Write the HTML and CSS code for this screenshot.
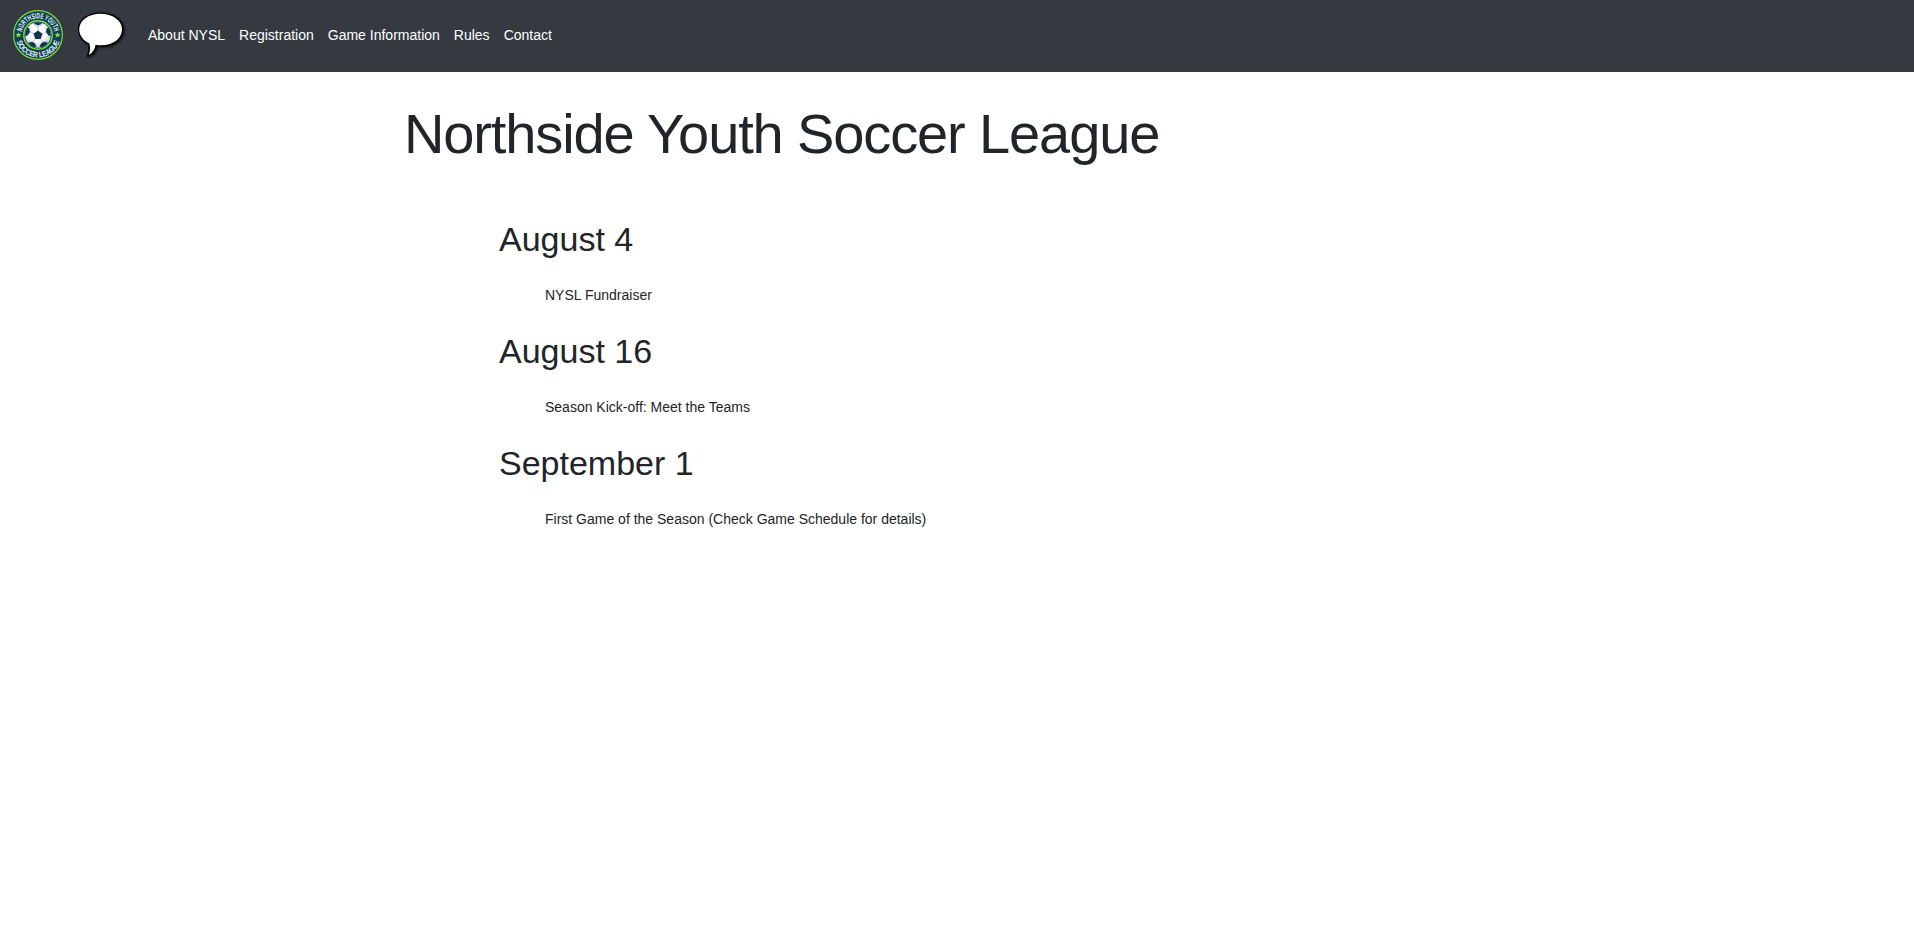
FILE: index.html
```html
<!DOCTYPE html>
<html lang="en">
<head>
<meta charset="utf-8">
<title>Northside Youth Soccer League</title>
<link rel="stylesheet" href="styles.css">
</head>
<body>
<nav class="navbar">
  <a class="brand" href="#" aria-label="Home">
    <svg class="logo" viewBox="0 0 100 100">
      <defs>
        <path id="arc-top" d="M17 50A33 33 0 0 1 83 50"/>
        <path id="arc-bottom" d="M5 50A45 45 0 0 0 95 50"/>
        <clipPath id="ball"><circle cx="50" cy="50" r="25.500"/></clipPath>
        <radialGradient id="shade" cx=".45" cy=".4" r=".6"><stop offset=".55" stop-color="#fff"/><stop offset="1" stop-color="#c3ced8"/></radialGradient>
      </defs>
      <circle cx="50" cy="50" r="48.800" fill="#0f4257" stroke="#7cdc3c" stroke-width="2.400"/>
      <circle cx="50" cy="50" r="28.500" fill="#0f4257" stroke="#7cdc3c" stroke-width="2.800"/>
      <circle cx="50" cy="50" r="25.500" fill="url(#shade)"/>
      <g clip-path="url(#ball)">
        <path fill="none" stroke="#a9b6c2" stroke-width="1.500" d="M50 42v-8M57.600 47.500l8-3M54.700 56.500l5 7M45.300 56.500l-5 7M42.400 47.500l-8-3M50 34l-9-5M50 34l9-5M65.600 44.500l1-9M65.600 44.500l7 6M59.700 63.500l9-1M59.700 63.500l-4 8M40.300 63.500l-9-1M40.300 63.500l4 8M34.400 44.500l-1-9M34.400 44.500l-7 6"/>
        <path fill="#0f3850" d="M50 41l9 6.500-3.400 10.500H44.400L41 47.500zM40 22h20l-3 6-7 3-7-3zM77 36v17l-6-2-5-7 2-8zM67 77l-14-4 3-6 5-3 8 1zM33 77l14-4-3-6-5-3-8 1zM23 36v17l6-2 5-7-2-8z"/>
      </g>
      <path fill="#86df35" d="M11 44l1.800 4h4.400l-3.500 2.800 1.300 4.200-4-2.500-4 2.500 1.300-4.200L4.800 48h4.400zM89 44l1.800 4h4.400l-3.500 2.800 1.300 4.200-4-2.500-4 2.500 1.300-4.200-3.500-2.800h4.400z"/>
      <text class="logo-text"><textPath href="#arc-top" startOffset="50%" text-anchor="middle" textLength="91" lengthAdjust="spacingAndGlyphs">NORTHSIDE YOUTH</textPath></text>
      <text class="logo-text"><textPath href="#arc-bottom" startOffset="50%" text-anchor="middle" textLength="114" lengthAdjust="spacingAndGlyphs">SOCCER LEAGUE</textPath></text>
    </svg>
  </a>
  <a class="chat" href="#" aria-label="Messages">
    <svg class="bubble" viewBox="0 0 60 58">
      <defs><filter id="soft" x="-20%" y="-20%" width="140%" height="140%"><feGaussianBlur stdDeviation="1.100"/></filter></defs>
      <path filter="url(#soft)" fill="#000" stroke="#000" stroke-width="3" opacity=".75" transform="translate(1.200 .8)" d="M30.500 10.800c12 0 21.500 6.500 21.500 15.500s-8.500 16-20.500 16c-2 0-4-.2-6-.6-.4 4.300-3 8.500-6.700 10 1.500-4 1.600-7.500.5-11.400C13.500 38 9.200 32.500 9.200 26.600c0-9.100 9.300-15.800 21.300-15.800z"/>
      <path fill="#fff" stroke="#000" stroke-width="2.800" paint-order="stroke" d="M30.500 10.800c12 0 21.500 6.500 21.500 15.500s-8.500 16-20.500 16c-2 0-4-.2-6-.6-.4 4.300-3 8.500-6.700 10 1.500-4 1.600-7.500.5-11.400C13.500 38 9.200 32.500 9.200 26.600c0-9.100 9.300-15.800 21.300-15.800z"/>
    </svg>
  </a>
  <ul class="nav-list">
    <li><a href="#">About NYSL</a></li>
    <li><a href="#">Registration</a></li>
    <li><a href="#">Game Information</a></li>
    <li><a href="#">Rules</a></li>
    <li><a href="#">Contact</a></li>
  </ul>
</nav>
<main class="content">
  <h1 class="title">Northside Youth Soccer League</h1>
  <section class="events">
    <h2 class="date">August 4</h2>
    <p class="event">NYSL Fundraiser</p>
    <h2 class="date">August 16</h2>
    <p class="event">Season Kick-off: Meet the Teams</p>
    <h2 class="date">September 1</h2>
    <p class="event">First Game of the Season (Check Game Schedule for details)</p>
  </section>
</main>
</body>
</html>
```
FILE: styles.css
```css
* { box-sizing: border-box; }
body {
  margin: 0;
  background: #fff;
  color: #212529;
  font: 14px/20px "Liberation Sans", Arial, sans-serif;
}
.navbar {
  display: flex;
  align-items: center;
  height: 72px;
  padding-left: 13px;
  background: #343a40;
}
.brand, .chat { display: flex; }
.brand { margin-bottom: 2px; }
.logo { width: 50px; height: 50px; }
.logo-text {
  font: bold 16px "Liberation Sans", Arial, sans-serif;
  fill: #e4f0f4;
}
.chat { margin: 0 18px 8px 7px; }
.bubble { width: 60px; height: 58px; }
.nav-list {
  display: flex;
  gap: 14px;
  margin: 0 0 2px;
  padding: 0;
  list-style: none;
}
.nav-list a { color: #fff; text-decoration: none; }
.content { padding: 28px 0 0 404px; }
.title {
  margin: 0 0 52px;
  font-size: 56px;
  font-weight: 400;
  line-height: 67px;
  letter-spacing: -1.120px;
}
.events { padding-left: 95px; }
.date {
  margin: 0 0 26px;
  font-size: 34px;
  font-weight: 400;
  line-height: 40px;
}
.event { margin: 0 0 26px; padding-left: 46px; }
```
